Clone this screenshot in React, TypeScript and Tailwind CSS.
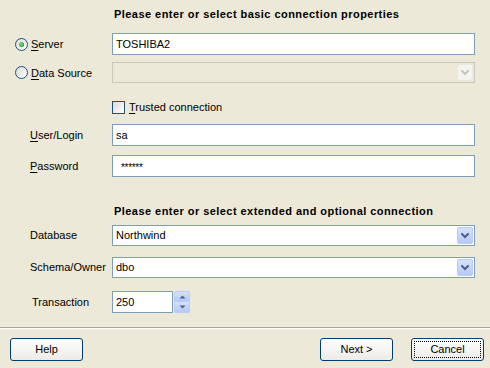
import React from 'react';

const Chevron = ({ color = '#4D6185' }: { color?: string }) => (
  <svg width="8" height="6" viewBox="0 0 8 6">
    <path d="M1 1 L4 4 L7 1" stroke={color} strokeWidth="2" fill="none" strokeLinecap="square" />
  </svg>
);

const Radio = ({ checked }: { checked?: boolean }) => (
  <span className="flex h-[13px] w-[13px] items-center justify-center rounded-full border border-[#1C5180] bg-gradient-to-br from-[#DCDBD5] to-white">
    {checked && (
      <span className="h-[5px] w-[5px] rounded-full bg-[radial-gradient(circle_at_40%_40%,#8BE28B,#21A121_70%)]" />
    )}
  </span>
);

const Label = ({ text, ul }: { text: string; ul?: number }) => (
  <span className="leading-[14px] whitespace-nowrap">
    {ul === undefined ? (
      text
    ) : (
      <>
        {text.slice(0, ul)}
        <span className="underline underline-offset-[2px]">{text[ul]}</span>
        {text.slice(ul + 1)}
      </>
    )}
  </span>
);

const TextBox = ({ value, className = '' }: { value: React.ReactNode; className?: string }) => (
  <div className={`flex h-[22px] items-center border border-[#7F9DB9] bg-white pl-[3px] ${className}`}>
    {value}
  </div>
);

const Combo = ({ value, disabled }: { value?: string; disabled?: boolean }) => (
  <div
    className={`flex h-[21px] w-[363px] items-center justify-between border p-[1px] ${
      disabled ? 'border-[#C9C7BA] bg-[#ECE9D8]' : 'border-[#7F9DB9] bg-white'
    }`}
  >
    <span className="pl-[2px]">{value}</span>
    {disabled ? (
      <span className="flex h-[17px] w-[16px] items-center justify-center rounded-[2px] border border-[#E9E8E1] bg-[#F5F4EE]">
        <Chevron color="#C9C7BA" />
      </span>
    ) : (
      <span className="flex h-[17px] w-[16px] items-center justify-center rounded-[2px] border border-[#BACBF5] bg-gradient-to-b from-[#D6E2FD] to-[#B4C9F8]">
        <Chevron />
      </span>
    )}
  </div>
);

const Button = ({ text, focused }: { text: string; focused?: boolean }) => (
  <div className="flex h-[23px] w-[73px] items-center justify-center rounded-[3px] border border-[#003C74] bg-gradient-to-b from-white to-[#ECEBE6] p-[2px]">
    <div
      className={`flex h-full w-full items-center justify-center ${
        focused ? 'border border-dotted border-black' : ''
      }`}
    >
      {text}
    </div>
  </div>
);

export default function App() {
  return (
    <div className="flex h-[368px] w-[490px] flex-col bg-[#ECE9D8] font-['Liberation_Sans',Arial,sans-serif] text-[11px] text-black">
      <div className="flex flex-col pt-[7px]">
        <div className="h-[14px] pl-[114px] text-[11px] font-bold leading-[14px] tracking-[0.45px]">
          Please enter or select basic connection properties
        </div>

        <div className="mt-[12px] flex h-[22px] items-center">
          <div className="flex w-[112px] items-center gap-[3px] pl-[15px]">
            <Radio checked />
            <Label text="Server" ul={0} />
          </div>
          <TextBox value="TOSHIBA2" className="w-[363px]" />
        </div>

        <div className="mt-[7px] flex h-[21px] items-center">
          <div className="flex w-[112px] items-center gap-[3px] pl-[15px]">
            <Radio />
            <Label text="Data Source" ul={0} />
          </div>
          <Combo disabled />
        </div>

        <div className="mt-[18px] flex h-[13px] items-center pl-[112px]">
          <span className="h-[13px] w-[13px] border border-[#1C5180] bg-gradient-to-br from-[#DCDBD5] to-white" />
          <span className="ml-[4px]">
            <Label text="Trusted connection" ul={0} />
          </span>
        </div>

        <div className="mt-[10px] flex h-[22px] items-center">
          <div className="w-[112px] pl-[30px]">
            <Label text="User/Login" ul={0} />
          </div>
          <TextBox value="sa" className="w-[363px]" />
        </div>

        <div className="mt-[9px] flex h-[22px] items-center">
          <div className="w-[112px] pl-[30px]">
            <Label text="Password" ul={0} />
          </div>
          <TextBox
            value={<span className="pl-[5px] pt-[2px] text-[10px] tracking-[-0.3px]">******</span>}
            className="w-[363px]"
          />
        </div>

        <div className="mt-[27px] h-[14px] pl-[114px] text-[11px] font-bold leading-[14px] tracking-[0.45px]">
          Please enter or select extended and optional connection
        </div>

        <div className="mt-[7px] flex h-[21px] items-center">
          <div className="w-[112px] pl-[30px]">
            <Label text="Database" />
          </div>
          <Combo value="Northwind" />
        </div>

        <div className="mt-[11px] flex h-[21px] items-center">
          <div className="w-[112px] pl-[30px]">
            <Label text="Schema/Owner" />
          </div>
          <Combo value="dbo" />
        </div>

        <div className="mt-[13px] flex h-[22px] items-center">
          <div className="w-[112px] pl-[32px]">
            <Label text="Transaction" />
          </div>
          <TextBox value="250" className="w-[61px]" />
          <div className="ml-[1px] flex h-[22px] w-[16px] flex-col">
            <span className="flex h-[11px] items-center justify-center rounded-t-[2px] border border-[#BACBF5] bg-gradient-to-b from-[#D6E2FD] to-[#B4C9F8]">
              <svg width="7" height="4" viewBox="0 0 7 4">
                <path d="M0.5 3.5 L3.5 0.5 L6.5 3.5 Z" fill="#4D6185" />
              </svg>
            </span>
            <span className="flex h-[11px] items-center justify-center rounded-b-[2px] border border-t-0 border-[#BACBF5] bg-gradient-to-b from-[#D6E2FD] to-[#B4C9F8]">
              <svg width="7" height="4" viewBox="0 0 7 4">
                <path d="M0.5 0.5 L3.5 3.5 L6.5 0.5 Z" fill="#4D6185" />
              </svg>
            </span>
          </div>
        </div>
      </div>

      <div className="mt-[14px] border-t border-b border-t-[#ACA899] border-b-white" />

      <div className="mt-[9px] flex items-center pl-[10px]">
        <Button text="Help" />
        <div className="ml-[237px]">
          <Button text="Next >" />
        </div>
        <div className="ml-[18px]">
          <Button text="Cancel" focused />
        </div>
      </div>
    </div>
  );
}
